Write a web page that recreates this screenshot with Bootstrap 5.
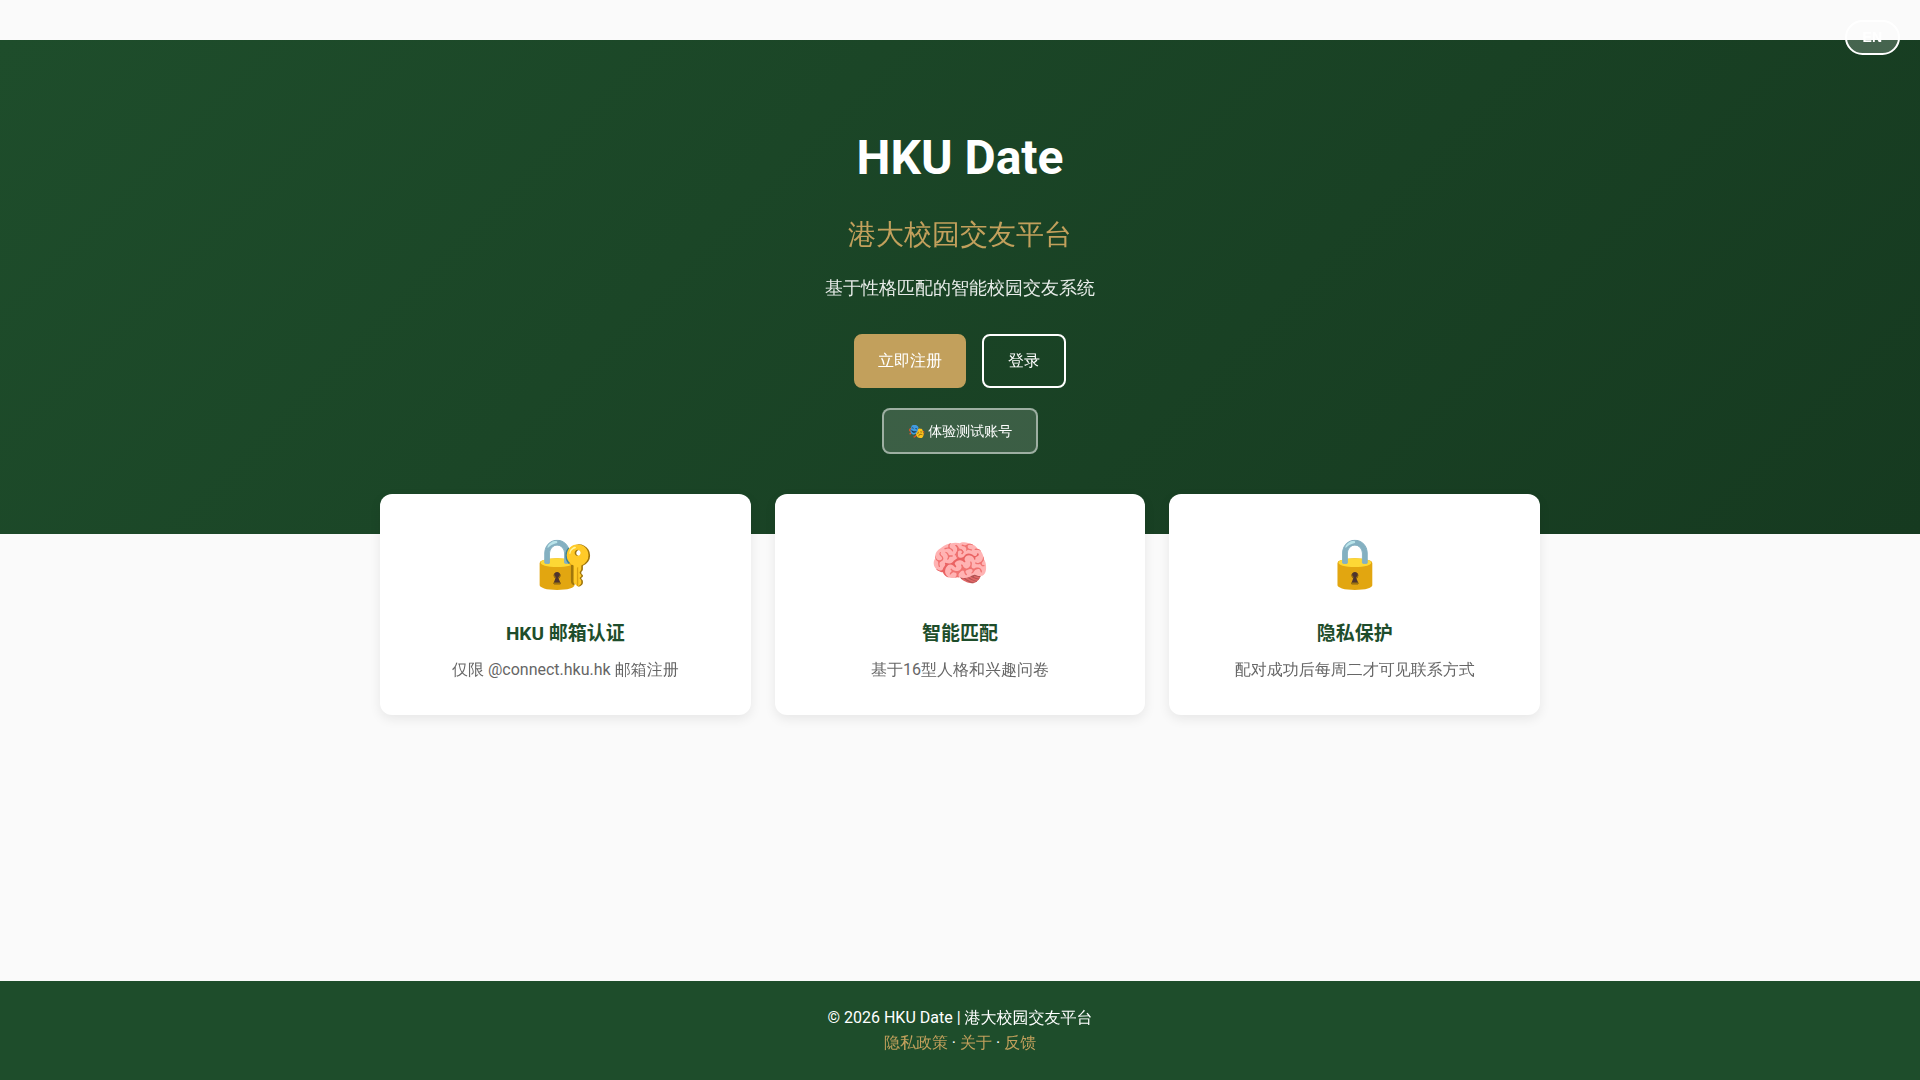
<!DOCTYPE html>
<html lang="zh-CN">
<head>
<meta charset="utf-8">
<meta name="viewport" content="width=device-width, initial-scale=1">
<title>HKU Date</title>
<link href="https://cdn.jsdelivr.net/npm/bootstrap@5.3.0/dist/css/bootstrap.min.css" rel="stylesheet">
<style>
  :root { --hku-green: #1e4d2b; --hku-gold: #c2a05c; }
  body { font-family: Roboto, "WenQuanYi Zen Hei", "Noto Sans CJK SC", sans-serif; line-height: 1.6; background: #fafafa; color: #333; }
  .lang-toggle { top: 20px; right: 20px; z-index: 1000; padding: 8px 16px; border: 2px solid #fff; border-radius: 20px; background: rgba(255,255,255,.2); color: #fff; font-family: "Liberation Sans", Arial, sans-serif; font-size: 14px; font-weight: 700; line-height: 15px; }
  .hero { margin-top: 40px; padding: 80px 20px; background: linear-gradient(135deg, #1e4d2b 0%, #163a20 100%); }
  .hero-title { font-size: 48px; font-weight: 700; line-height: 1.6; }
  .hero-subtitle { font-size: 28px; color: var(--hku-gold); }
  .hero-text { font-size: 18px; margin-bottom: 32px; opacity: .9; }
  .hero .btn { --bs-btn-line-height: 1.6; --bs-btn-border-width: 2px; --bs-btn-padding-x: 24px; --bs-btn-padding-y: 12px; --bs-btn-border-radius: 8px; --bs-btn-color: #fff; --bs-btn-hover-color: #fff; }
  .hero .btn-gold { --bs-btn-bg: var(--hku-gold); --bs-btn-border-color: var(--hku-gold); --bs-btn-hover-bg: #b39249; padding-inline: 22px; }
  .hero .btn-line { --bs-btn-border-color: #fff; --bs-btn-hover-bg: rgba(255,255,255,.1); }
  .hero .btn-demo { --bs-btn-font-size: 14px; --bs-btn-padding-y: 10px; --bs-btn-bg: rgba(255,255,255,.15); --bs-btn-border-color: rgba(255,255,255,.5); margin-top: 20px; }
  .features { max-width: 1200px; margin-top: -40px; padding: 0 20px; }
  .feature { padding: 32px; border-radius: 12px; box-shadow: 0 4px 12px rgba(0,0,0,.08); }
  .feature-icon { font-size: 48px; }
  .feature-title { font-family: Roboto, "Noto Sans CJK SC", sans-serif; font-size: 19px; line-height: 30px; font-weight: 700; color: var(--hku-green); }
  .feature-text { color: #666; }
  .site-footer { background: var(--hku-green); }
  .site-footer a { color: var(--hku-gold); }
</style>
</head>
<body class="d-flex flex-column min-vh-100">
<button type="button" class="lang-toggle position-fixed">EN</button>
<header class="hero text-center text-white">
  <h1 class="hero-title mb-3">HKU Date</h1>
  <p class="hero-subtitle mb-3">港大校园交友平台</p>
  <p class="hero-text">基于性格匹配的智能校园交友系统</p>
  <div class="d-flex justify-content-center gap-3">
    <a href="#" class="btn btn-gold">立即注册</a>
    <a href="#" class="btn btn-line">登录</a>
  </div>
  <div class="d-flex justify-content-center">
    <button type="button" class="btn btn-demo">🎭 体验测试账号</button>
  </div>
</header>
<main class="features container-fluid position-relative">
  <div class="row row-cols-1 row-cols-md-3 g-4 mt-0">
    <div class="col mt-0"><section class="feature bg-white text-center h-100">
      <div class="feature-icon mb-3">🔐</div>
      <h3 class="feature-title mb-2">HKU 邮箱认证</h3>
      <p class="feature-text mb-0">仅限 @connect.hku.hk 邮箱注册</p>
    </section></div>
    <div class="col mt-0"><section class="feature bg-white text-center h-100">
      <div class="feature-icon mb-3">🧠</div>
      <h3 class="feature-title mb-2">智能匹配</h3>
      <p class="feature-text mb-0">基于16型人格和兴趣问卷</p>
    </section></div>
    <div class="col mt-0"><section class="feature bg-white text-center h-100">
      <div class="feature-icon mb-3">🔒</div>
      <h3 class="feature-title mb-2">隐私保护</h3>
      <p class="feature-text mb-0">配对成功后每周二才可见联系方式</p>
    </section></div>
  </div>
</main>
<footer class="site-footer text-center text-white py-4 mt-auto">
  <p class="mb-0">© 2026 HKU Date | 港大校园交友平台</p>
  <p class="mb-0"><a href="#" class="text-decoration-none">隐私政策</a> · <a href="#" class="text-decoration-none">关于</a> · <a href="#" class="text-decoration-none">反馈</a></p>
</footer>
<script src="https://cdn.jsdelivr.net/npm/bootstrap@5.3.0/dist/js/bootstrap.bundle.min.js"></script>
</body>
</html>
